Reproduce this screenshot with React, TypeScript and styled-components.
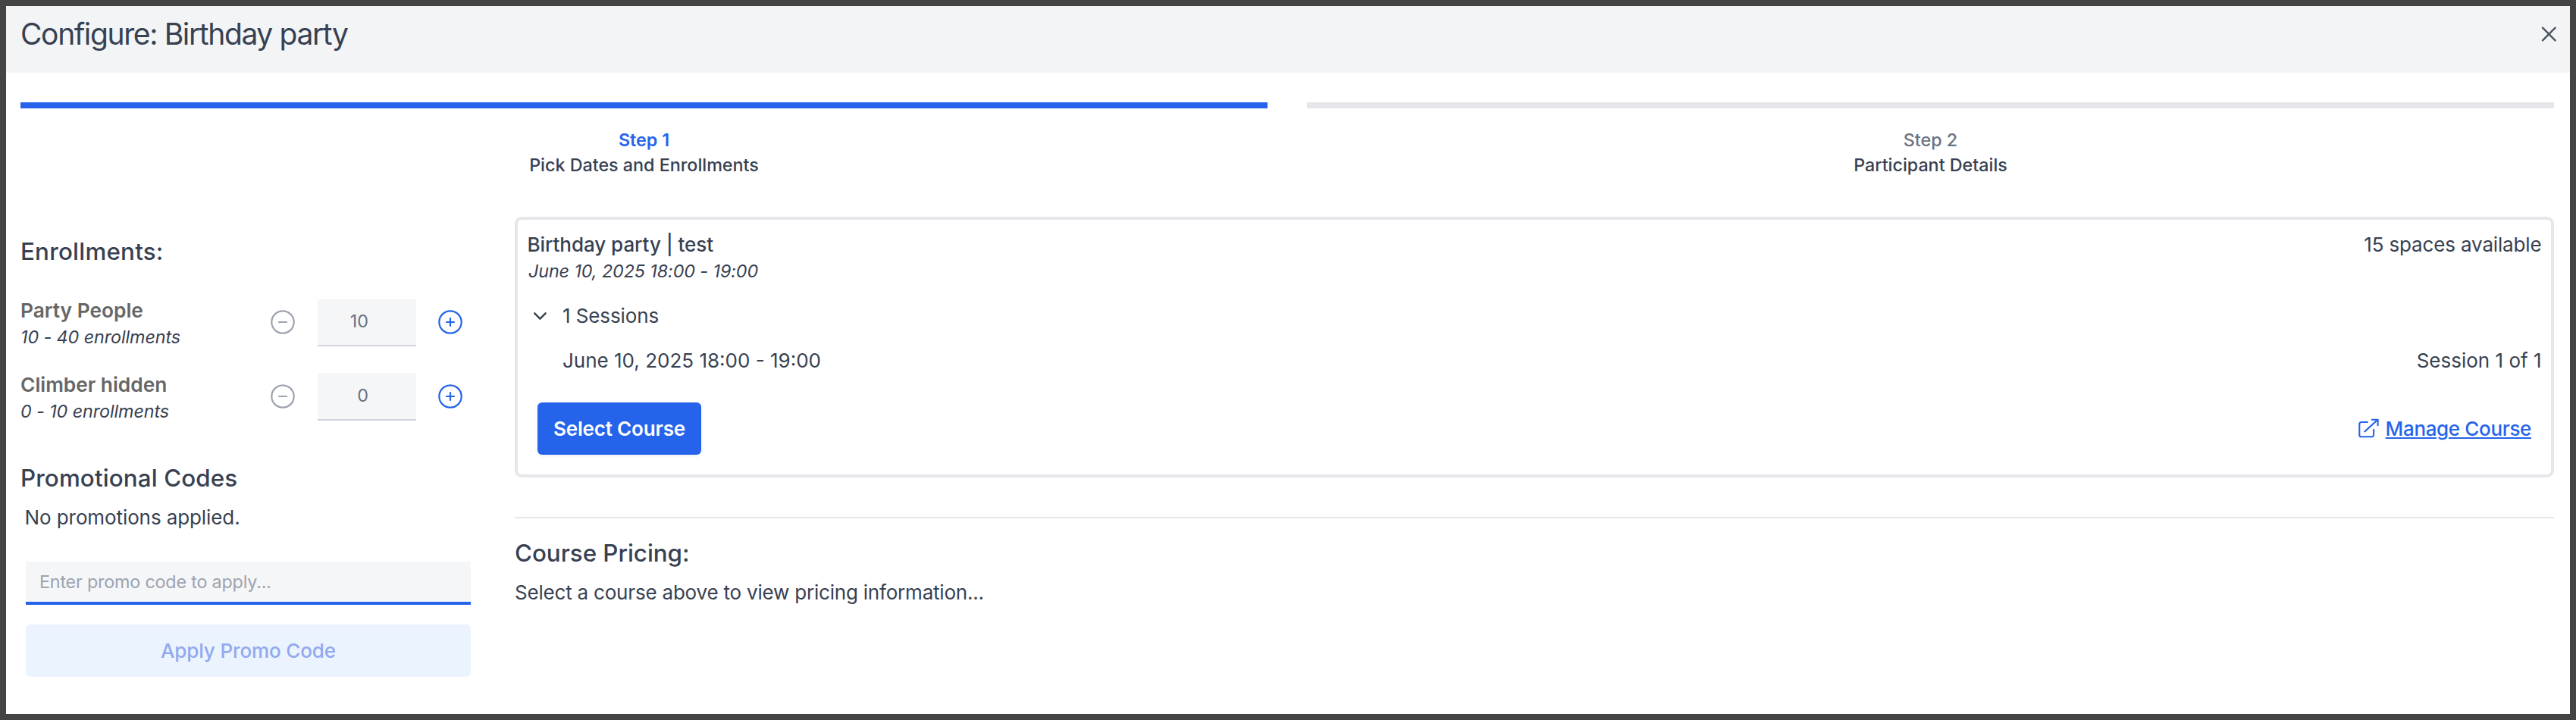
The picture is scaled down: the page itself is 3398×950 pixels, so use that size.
import React from 'react';
import styled, { createGlobalStyle } from 'styled-components';

const GlobalStyle = createGlobalStyle`
  *, *::before, *::after { box-sizing: border-box; }
  body { margin: 0; background: #fff; font-family: Inter, "Liberation Sans", sans-serif; color: #374151; }
  h1, h2, p { margin: 0; }
  button, input { font-family: inherit; }
`;

const Dialog = styled.div`
  display: flex;
  flex-direction: column;
  height: 950px;
  border: 8px solid #444;
  background: #fff;
`;

const Header = styled.header`
  display: flex;
  justify-content: space-between;
  align-items: flex-start;
  height: 88px;
  padding: 12px 18px 0 19px;
  background: #f3f4f6;
`;

const Title = styled.h1`
  font-size: 39px;
  line-height: 50px;
  font-weight: 400;
  letter-spacing: -1.37px;
`;

const CloseButton = styled.button`
  display: flex;
  padding: 0;
  margin-top: 14.5px;
  border: 0;
  background: none;
  color: #4b5563;
`;

const Stepper = styled.nav`
  display: flex;
  gap: 52px;
  padding: 39px 21px 0 19px;
`;

const Step = styled.div<{ $active?: boolean }>`
  flex: 1;
  padding-top: 25px;
  border-top: 8px solid ${(p) => (p.$active ? '#2563eb' : '#e5e7eb')};
  text-align: center;
  font-size: 23.3px;
  line-height: 33px;
  font-weight: 500;
`;

const StepName = styled.div<{ $active?: boolean }>`
  font-weight: ${(p) => (p.$active ? 600 : 500)};
  color: ${(p) => (p.$active ? '#2563eb' : '#6b7280')};
`;

const Columns = styled.div`
  display: flex;
  padding: 52px 21px 0 19px;
`;

const Sidebar = styled.aside`
  width: 594px;
  margin-right: 58px;
  padding-top: 26px;
`;

const Heading = styled.h2<{ $tracking?: number }>`
  font-size: 31.3px;
  line-height: 40px;
  font-weight: 500;
  letter-spacing: ${(p) => p.$tracking ?? 0}px;
`;

const EnrollmentList = styled.div`
  height: 258.6px;
  padding-top: 39px;
`;

const EnrollmentRow = styled.div`
  display: flex;
  height: 97.8px;
`;

const EnrollmentLabel = styled.div`
  width: 329.4px;
  padding-top: 1px;
`;

const EnrollmentName = styled.div`
  font-size: 26.3px;
  line-height: 36px;
  font-weight: 600;
  color: #666;
`;

const Note = styled.div`
  font-size: 23.3px;
  line-height: 34px;
  font-style: italic;
  letter-spacing: -0.08px;
`;

const Stepping = styled.div`
  display: flex;
  align-items: center;
  gap: 28.5px;
  height: 62.5px;
  margin-top: 3.6px;
`;

const RoundButton = styled.button<{ $muted?: boolean }>`
  display: flex;
  padding: 0;
  margin-bottom: 1px;
  border: 0;
  background: none;
  color: ${(p) => (p.$muted ? '#9ca3af' : '#2563eb')};
`;

const CountInput = styled.input`
  width: 130px;
  height: 100%;
  padding: 0 63px 3px 0;
  border: 0;
  border-bottom: 2px solid #d1d5db;
  border-radius: 0;
  background: #f5f6f8;
  color: #6b7280;
  text-align: right;
  font-size: 23.3px;
`;

const PromoBody = styled.div`
  padding: 14px 0 0 7px;
`;

const Text = styled.p<{ $tracking?: number }>`
  font-size: 26px;
  line-height: 36px;
  letter-spacing: ${(p) => p.$tracking ?? 0}px;
`;

const PromoStatus = styled(Text)`
  text-indent: -1.4px;
`;

const PromoInput = styled.input`
  display: block;
  width: 100%;
  height: 57px;
  margin-top: 40.4px;
  padding: 0 18px;
  border: 0;
  border-bottom: 4px solid #2563eb;
  border-radius: 0;
  background: #f5f6f8;
  font-size: 23.3px;
  letter-spacing: -0.18px;
  &::placeholder { color: #9ca3af; opacity: 1; }
`;

const Button = styled.button`
  display: block;
  width: 216px;
  height: 69px;
  padding: 0;
  border: 0;
  border-radius: 6px;
  background: #2563eb;
  box-shadow: 0 2px 4px rgba(0, 0, 0, 0.06);
  color: #fff;
  font-size: 26px;
  font-weight: 600;
  letter-spacing: -0.18px;
  white-space: nowrap;
`;

const ApplyButton = styled(Button)`
  width: 100%;
  margin-top: 26px;
  background: #ebf3fe;
  box-shadow: none;
  color: #92a9ee;
  font-weight: 500;
  letter-spacing: -0.13px;
`;

const Main = styled.main`
  flex: 1;
`;

const Card = styled.section`
  height: 344px;
  padding: 15px 12.5px 0 14px;
  border: 4px solid #e5e7eb;
  border-radius: 9px;
`;

const Row = styled.div`
  display: flex;
  justify-content: space-between;
  align-items: center;
`;

const CourseName = styled(Text)`
  font-weight: 500;
  text-indent: -1.5px;
`;

const Sessions = styled.div`
  display: flex;
  align-items: center;
  gap: 18px;
  padding: 24px 0 23px 3px;
`;

const SessionRow = styled(Row)`
  padding-left: 45px;
`;

const CardActions = styled(Row)`
  padding: 37px 13.5px 0 12px;
`;

const ManageLink = styled.a`
  display: flex;
  align-items: center;
  gap: 9px;
  font-size: 26px;
  font-weight: 500;
  letter-spacing: -0.35px;
  color: #2563eb;
`;

const LinkText = styled.span`
  text-decoration: underline;
  text-decoration-thickness: 2px;
  text-underline-offset: 2px;
`;

const Pricing = styled.section`
  margin-top: 52px;
  padding-top: 26px;
  border-top: 2px solid #e5e7eb;
`;

const PricingText = styled(Text)`
  margin-top: 14px;
`;

const line = { fill: 'none', stroke: 'currentColor', strokeLinecap: 'round', strokeLinejoin: 'round' } as const;

const CircleIcon = ({ plus }: { plus?: boolean }) => (
  <svg width="34" height="34" viewBox="0 0 34 34" strokeWidth="2.2" {...line}>
    <circle cx="17" cy="17" r="14.7" />
    <path d={plus ? 'M12 17h10M17 12v10' : 'M12 17h10'} />
  </svg>
);

const Counter = ({ name, note, count }: { name: string; note: string; count: number }) => (
  <EnrollmentRow>
    <EnrollmentLabel>
      <EnrollmentName>{name}</EnrollmentName>
      <Note>{note}</Note>
    </EnrollmentLabel>
    <Stepping>
      <RoundButton $muted aria-label="Remove one"><CircleIcon /></RoundButton>
      <CountInput defaultValue={count} />
      <RoundButton aria-label="Add one"><CircleIcon plus /></RoundButton>
    </Stepping>
  </EnrollmentRow>
);

export default function App() {
  return (
    <Dialog>
      <GlobalStyle />
      <Header>
        <Title>Configure: Birthday party</Title>
        <CloseButton aria-label="Close">
          <svg width="20" height="20" viewBox="0 0 20 20" strokeWidth="2.4" {...line}>
            <path d="M2 1.7l16.6 16.6M18.6 1.7L2 18.3" />
          </svg>
        </CloseButton>
      </Header>
      <Stepper>
        <Step $active>
          <StepName $active>Step 1</StepName>
          <div>Pick Dates and Enrollments</div>
        </Step>
        <Step>
          <StepName>Step 2</StepName>
          <div>Participant Details</div>
        </Step>
      </Stepper>
      <Columns>
        <Sidebar>
          <Heading $tracking={0.25}>Enrollments:</Heading>
          <EnrollmentList>
            <Counter name="Party People" note="10 - 40 enrollments" count={10} />
            <Counter name="Climber hidden" note="0 - 10 enrollments" count={0} />
          </EnrollmentList>
          <Heading $tracking={0.14}>Promotional Codes</Heading>
          <PromoBody>
            <PromoStatus $tracking={-0.1}>No promotions applied.</PromoStatus>
            <PromoInput placeholder="Enter promo code to apply..." />
            <ApplyButton>Apply Promo Code</ApplyButton>
          </PromoBody>
        </Sidebar>
        <Main>
          <Card>
            <Row>
              <CourseName $tracking={-0.04}>Birthday party | test</CourseName>
              <Text $tracking={-0.15}>15 spaces available</Text>
            </Row>
            <Note>June 10, 2025 18:00 - 19:00</Note>
            <Sessions>
              <svg width="24" height="24" viewBox="0 0 24 24" strokeWidth="2.4" {...line}>
                <path d="M5.2 8.3l7.2 7.4 7.2-7.4" />
              </svg>
              <Text $tracking={-0.1}>1 Sessions</Text>
            </Sessions>
            <SessionRow>
              <Text>June 10, 2025 18:00 - 19:00</Text>
              <Text>Session 1 of 1</Text>
            </SessionRow>
            <CardActions>
              <Button>Select Course</Button>
              <ManageLink>
                <svg width="28" height="28" viewBox="0 0 28 28" strokeWidth="2.1" {...line}>
                  <path d="M13 5H4.6a2.3 2.3 0 0 0-2.3 2.3v14.6a2.3 2.3 0 0 0 2.3 2.3h14.2a2.3 2.3 0 0 0 2.3-2.3v-7.2M9.3 17.4L26.4 1.8M18.8 1.8h7.8v7.4" />
                </svg>
                <LinkText>Manage Course</LinkText>
              </ManageLink>
            </CardActions>
          </Card>
          <Pricing>
            <Heading>Course Pricing:</Heading>
            <PricingText $tracking={-0.2}>Select a course above to view pricing information...</PricingText>
          </Pricing>
        </Main>
      </Columns>
    </Dialog>
  );
}
